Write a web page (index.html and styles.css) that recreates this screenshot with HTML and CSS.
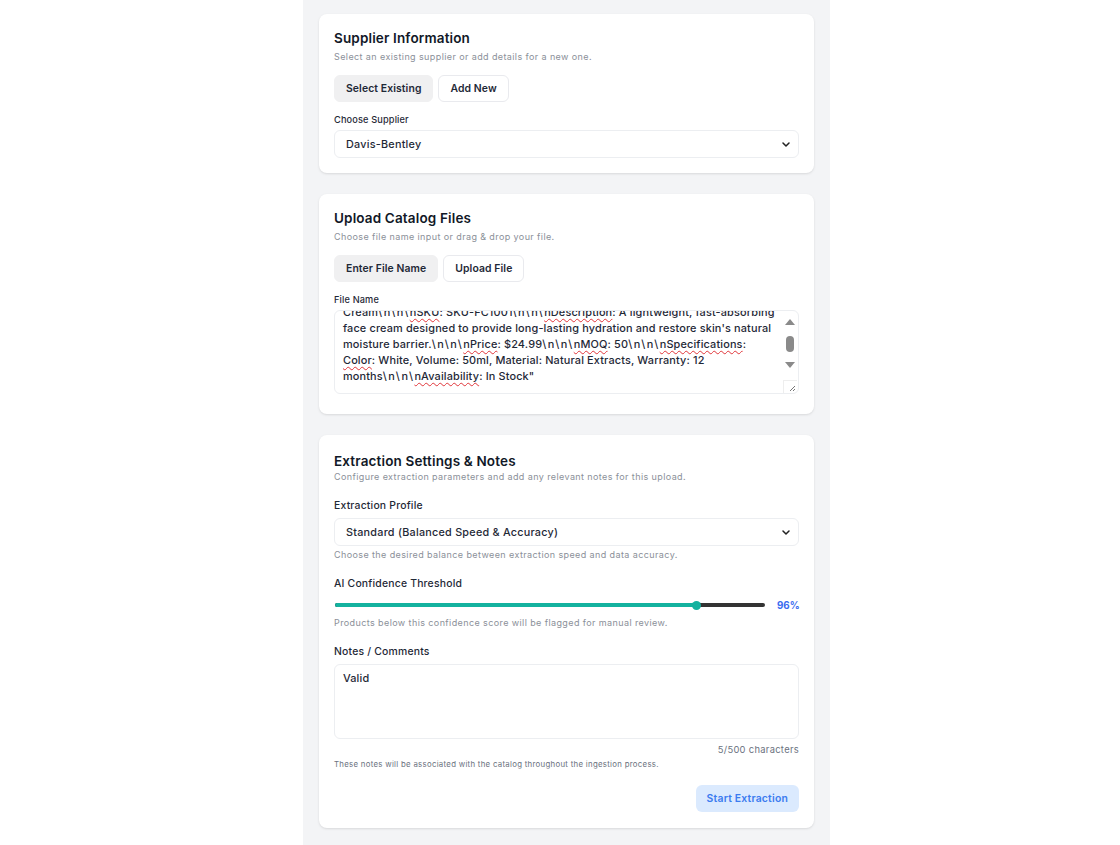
FILE: index.html
```html
<!DOCTYPE html>
<html lang="en">
<head>
<meta charset="utf-8">
<title>Catalog Ingestion</title>
<link rel="stylesheet" href="styles.css">
</head>
<body>
<main class="page">
  <section class="card card-supplier">
    <h2 class="card-title">Supplier Information</h2>
    <p class="card-sub">Select an existing supplier or add details for a new one.</p>
    <div class="toggle">
      <button class="tbtn active">Select Existing</button>
      <button class="tbtn">Add New</button>
    </div>
    <label class="small-label">Choose Supplier</label>
    <div class="select">
      <span>Davis-Bentley</span>
      <svg class="chev" viewBox="0 0 8 5" width="8" height="5"><path d="M1 1l3 3 3-3" fill="none" stroke="#222" stroke-width="1.5" stroke-linecap="round" stroke-linejoin="round"/></svg>
    </div>
  </section>

  <section class="card card-upload">
    <h2 class="card-title">Upload Catalog Files</h2>
    <p class="card-sub">Choose file name input or drag &amp; drop your file.</p>
    <div class="toggle">
      <button class="tbtn active">Enter File Name</button>
      <button class="tbtn">Upload File</button>
    </div>
    <label class="small-label">File Name</label>
    <div class="fake-textarea">
      <div class="ta-scroll">
        <div class="ta-text">
          <div>Cream<span class="esc">\n\n\</span><span class="sp">nSKU</span>: SKU-FC1001<span class="esc">\n\n\</span><span class="sp">nDescription</span>: A lightweight, fast-absorbing</div>
          <div>face cream designed to provide long-lasting hydration and restore skin's natural</div>
          <div>moisture barrier.<span class="esc">\n\n\</span><span class="sp">nPrice</span>: $24.99<span class="esc">\n\n\</span><span class="sp">nMOQ</span>: 50<span class="esc">\n\n\</span><span class="sp">nSpecifications</span>:</div>
          <div><span class="sp">Color</span>: White, Volume: 50ml, Material: Natural Extracts, Warranty: 12</div>
          <div>months<span class="esc">\n\n\</span><span class="sp">nAvailability</span>: In Stock"</div>
        </div>
      </div>
      <div class="scrollbar">
        <svg class="arrow" viewBox="0 0 10 6" width="10" height="6"><path d="M0 6L5 0L10 6Z" fill="#8a8a8a"/></svg>
        <div class="thumb"></div>
        <svg class="arrow" viewBox="0 0 10 6" width="10" height="6"><path d="M0 0L10 0L5 6Z" fill="#8a8a8a"/></svg>
        <div class="grip">
          <svg viewBox="0 0 8 8" width="8" height="8"><path d="M7 2L2 7M7 5L5 7" stroke="#777" stroke-width="1" fill="none"/></svg>
        </div>
      </div>
    </div>
  </section>

  <section class="card card-settings">
    <h2 class="card-title">Extraction Settings &amp; Notes</h2>
    <p class="card-sub tight">Configure extraction parameters and add any relevant notes for this upload.</p>

    <label class="field-label">Extraction Profile</label>
    <div class="select select-2">
      <span>Standard (Balanced Speed &amp; Accuracy)</span>
      <svg class="chev" viewBox="0 0 8 5" width="8" height="5"><path d="M1 1l3 3 3-3" fill="none" stroke="#222" stroke-width="1.5" stroke-linecap="round" stroke-linejoin="round"/></svg>
    </div>
    <p class="help">Choose the desired balance between extraction speed and data accuracy.</p>

    <label class="field-label">AI Confidence Threshold</label>
    <div class="slider-row">
      <div class="slider">
        <div class="fill" style="width:84%"></div>
        <div class="knob"></div>
      </div>
      <span class="pct">96%</span>
    </div>
    <p class="help help-slider">Products below this confidence score will be flagged for manual review.</p>

    <label class="field-label">Notes / Comments</label>
    <div class="notes">Valid</div>
    <div class="counter">5/500 characters</div>
    <p class="tiny">These notes will be associated with the catalog throughout the ingestion process.</p>
    <div class="actions">
      <button class="primary">Start Extraction</button>
    </div>
  </section>
</main>
</body>
</html>
```
FILE: styles.css
```css
* { box-sizing: border-box; }
html, body { margin: 0; padding: 0; }
body {
  background: #ffffff;
  font-family: "Inter", "Open Sans", sans-serif;
  color: #1f2937;
  padding-left: 13px;
}
.page {
  width: 527px;
  min-height: 845px;
  margin: 0 auto;
  background: #f3f4f6;
  padding: 14px 16px;
  display: flex;
  flex-direction: column;
  gap: 21px;
}
.card {
  background: #fff;
  border-radius: 8px;
  box-shadow: 0 1px 3px rgba(0,0,0,0.08), 0 1px 2px rgba(0,0,0,0.04);
  padding: 15px;
  display: flex;
  flex-direction: column;
  align-items: stretch;
}
.card-title {
  margin: 0;
  font-size: 13.5px;
  line-height: 18px;
  font-weight: 600;
  color: #111827;
  letter-spacing: 0.15px;
}
.card-sub {
  margin: 4px 0 0;
  font-size: 9px;
  line-height: 12px;
  letter-spacing: 0.4px;
  color: #8b9099;
}
.card-sub.tight { margin-top: 1px; }
.toggle {
  display: flex;
  gap: 5px;
  margin-top: 12px;
}
.tbtn {
  font-family: inherit;
  height: 27px;
  padding: 0 11px;
  border-radius: 6px;
  border: 1px solid #e9eaee;
  background: #fff;
  font-size: 10.4px;
  letter-spacing: 0.1px;
  font-weight: 600;
  color: #1f2937;
}
.tbtn.active {
  background: #f0f0f1;
  border-color: #f0f0f1;
}
.small-label {
  display: block;
  margin-top: 12px;
  font-size: 9.2px;
  letter-spacing: 0.15px;
  line-height: 12px;
  font-weight: 500;
  color: #1f2937;
}
.select {
  margin-top: 4px;
  height: 28px;
  border: 1px solid #eceef1;
  border-radius: 6px;
  display: flex;
  align-items: center;
  justify-content: space-between;
  padding: 0 8px 0 11px;
  font-size: 10.8px;
  letter-spacing: 0.25px;
  font-weight: 500;
  color: #1f2937;
}
.chev { flex: none; }
.fake-textarea {
  margin-top: 4px;
  margin-bottom: 5px;
  height: 84px;
  border: 1px solid #eceef1;
  border-radius: 6px;
  display: flex;
  overflow: hidden;
}
.ta-scroll {
  flex: 1;
  overflow: hidden;
  padding: 0 0 0 8px;
}
.ta-text {
  margin-top: -7px;
  font-size: 10.9px;
  letter-spacing: 0.15px;
  line-height: 16px;
  font-weight: 500;
  color: #1f2937;
  white-space: nowrap;
}
.esc { letter-spacing: 1.5px; }
.sp {
  text-decoration: underline wavy #e0353a;
  text-decoration-thickness: 1px;
  text-underline-offset: 2px;
}
.scrollbar {
  width: 15px;
  flex: none;
  display: flex;
  flex-direction: column;
  align-items: center;
  padding-top: 8px;
  margin-right: 1px;
}
.arrow { display: block; }
.thumb {
  width: 8px;
  height: 16px;
  border-radius: 4px;
  background: #8a8a8a;
  margin: 11px 0 10px;
}
.grip {
  margin-top: auto;
  width: 14px;
  height: 13px;
  border-left: 1px solid #eeeeee;
  border-top: 1px solid #eeeeee;
  display: flex;
  align-items: flex-end;
  justify-content: flex-end;
  padding: 0 1px 1px 0;
}
.grip svg { display: block; }
.card-settings { padding-top: 17px; padding-bottom: 16px; }
.field-label {
  display: block;
  margin-top: 16px;
  font-size: 10.4px;
  letter-spacing: 0.2px;
  line-height: 14px;
  font-weight: 500;
  color: #1f2937;
}
.select-2 { margin-top: 5px; }
.help {
  margin: 3px 0 0;
  font-size: 9px;
  letter-spacing: 0.4px;
  line-height: 12px;
  color: #8b9099;
}
.slider-row {
  margin-top: 7px;
  height: 14px;
  display: flex;
  align-items: center;
  gap: 12px;
  padding-left: 1px;
}
.slider {
  flex: 1;
  height: 4px;
  border-radius: 2px;
  background: #333;
  position: relative;
}
.fill {
  height: 100%;
  border-radius: 2px;
  background: #14b29f;
}
.knob {
  position: absolute;
  left: 84%;
  top: 50%;
  width: 9px;
  height: 9px;
  margin: -4.5px 0 0 -4.5px;
  border-radius: 50%;
  background: #14b29f;
}
.pct {
  font-size: 9.8px;
  font-weight: 700;
  color: #3b6cf0;
  width: 22px;
  text-align: right;
}
.help-slider { margin-top: 5px; }
.notes {
  margin-top: 5px;
  height: 75px;
  border: 1px solid #eceef1;
  border-radius: 6px;
  padding: 5px 8px;
  font-size: 10.9px;
  letter-spacing: 0.15px;
  line-height: 16px;
  font-weight: 500;
  color: #1f2937;
}
.counter {
  margin-top: 5px;
  text-align: right;
  font-size: 9.4px;
  letter-spacing: 0.3px;
  line-height: 12px;
  color: #6b7280;
}
.tiny {
  margin: 3px 0 0;
  font-size: 7.8px;
  letter-spacing: 0.3px;
  line-height: 10px;
  color: #6b7280;
}
.actions {
  margin-top: 16px;
  display: flex;
  justify-content: flex-end;
}
.primary {
  font-family: inherit;
  height: 27px;
  padding: 0 11px;
  border: none;
  border-radius: 6px;
  background: #dbeafe;
  color: #3b7cf0;
  font-size: 10.4px;
  letter-spacing: 0.2px;
  font-weight: 600;
}
```
